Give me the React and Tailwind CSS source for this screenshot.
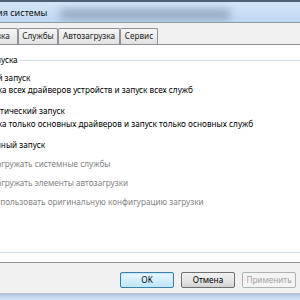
import React from "react";

const Radio = ({ checked }) => (
  <span className="w-[9px] h-[9px] rounded-full border border-[#8f8f8f] bg-gradient-to-br from-[#dcdcdc] to-[#fbfbfb] flex items-center justify-center shrink-0">
    {checked && <span className="w-[5px] h-[5px] rounded-full bg-[#2a7ad0]" />}
  </span>
);

const Check = () => (
  <span className="w-[9px] h-[9px] border border-[#b8b8b8] bg-[#f4f4f4] shrink-0" />
);

const Tab = ({ children, w }) => (
  <div
    className={`h-[16px] ${w} border border-b-0 border-[#8e9197] rounded-t-[2px] bg-gradient-to-b from-[#f5f5f5] to-[#e2e2e2] flex items-center justify-center text-[#1e1e1e]`}
  >
    {children}
  </div>
);

const Btn = ({ children, kind }) => {
  if (kind === "default")
    return (
      <div className="w-[54px] h-[16px] rounded-[2px] border border-[#3c7fb1] bg-gradient-to-b from-[#eaf6fd] to-[#bee6fd] shadow-[inset_0_0_0_1px_#c6e8fb] flex items-center justify-center">
        {children}
      </div>
    );
  if (kind === "disabled")
    return (
      <div className="w-[54px] h-[16px] rounded-[2px] border border-[#adb2b5] bg-[#f4f4f4] text-[#a3a3a3] flex items-center justify-center">
        {children}
      </div>
    );
  return (
    <div className="w-[54px] h-[16px] rounded-[2px] border border-[#707070] bg-gradient-to-b from-[#f2f2f2] via-[#e6e6e6] to-[#d2d2d2] flex items-center justify-center">
      {children}
    </div>
  );
};

export default function App() {
  return (
    <div className="w-[300px] h-[300px] overflow-hidden bg-[#f0f0f0] font-['Noto_Sans','Segoe_UI',sans-serif] text-[8.2px] leading-none text-black">
      <div className="w-[482px] h-[300px] ml-[-82px] flex flex-col">
        {/* title bar */}
        <div className="relative h-[22px] shrink-0 border-t-2 border-[#4d6176] bg-gradient-to-b from-[#d4e6f8] to-[#bfd8f1] overflow-hidden">
          <div className="absolute left-[142px] top-[7px] w-[170px] h-[11px] bg-[#7a90a6] blur-[4px] opacity-65" />
          <div className="relative flex h-full items-center pl-[26px] text-[9px] text-[#111]">
            Конфигурация системы
          </div>
        </div>

        {/* client area */}
        <div className="flex-1 flex flex-col border-t border-[#8d9aa8] bg-[#f0f0f0] pl-[8px] pr-[6px]">
          {/* tabs */}
          <div className="h-[21px] flex items-end pl-[2px]">
            <div className="relative z-10 -mb-px h-[18px] w-[39px] border border-b-0 border-[#8e9197] rounded-t-[2px] bg-white flex items-center justify-center">
              Общие
            </div>
            <Tab w="w-[51px]">Загрузка</Tab>
            <Tab w="w-[40px]">Службы</Tab>
            <Tab w="w-[62px]">Автозагрузка</Tab>
            <Tab w="w-[38px]">Сервис</Tab>
          </div>

          {/* panel */}
          <div className="h-[219px] bg-white border border-[#8e9197] px-[7px]">
            <fieldset className="mt-[9px] h-[199px] border border-[#d5dfe5] rounded-[3px]">
              <legend className="ml-[15px] px-[2px] h-[12px] flex items-center">Вариант запуска</legend>

              <div className="mt-[6px] ml-[16px] h-[12px] flex items-center gap-[4px]">
                <Radio checked />
                <span>Обычный запуск</span>
              </div>
              <div className="ml-[37px] h-[12px] flex items-center">
                Загрузка всех драйверов устройств и запуск всех служб
              </div>

              <div className="mt-[9px] ml-[19px] h-[12px] flex items-center gap-[4px]">
                <Radio />
                <span>Диагностический запуск</span>
              </div>
              <div className="mt-[1px] ml-[37px] h-[12px] flex items-center">
                Загрузка только основных драйверов и запуск только основных служб
              </div>

              <div className="mt-[9px] ml-[17px] h-[12px] flex items-center gap-[4px]">
                <Radio />
                <span>Выборочный запуск</span>
              </div>
              <div className="mt-[7px] ml-[44px] h-[12px] flex items-center gap-[4px] text-[#858585]">
                <Check />
                <span>Загружать системные службы</span>
              </div>
              <div className="mt-[7px] ml-[44px] h-[12px] flex items-center gap-[4px] text-[#858585]">
                <Check />
                <span>Загружать элементы автозагрузки</span>
              </div>
              <div className="mt-[7px] ml-[42px] h-[12px] flex items-center gap-[4px] text-[#858585]">
                <Check />
                <span>Использовать оригинальную конфигурацию загрузки</span>
              </div>
            </fieldset>
          </div>

          {/* buttons */}
          <div className="mt-[9px] h-[16px] flex justify-end gap-[7px] pr-[37px]">
            <Btn kind="default">OK</Btn>
            <Btn>Отмена</Btn>
            <Btn kind="disabled">Применить</Btn>
            <Btn>Справка</Btn>
          </div>
        </div>

        {/* bottom frame */}
        <div className="h-[8px] shrink-0 border-t border-[#f7f1f1] bg-gradient-to-b from-[#a9bed3] via-[#c4d9ee] to-[#cfe2f5]" />
      </div>
    </div>
  );
}
